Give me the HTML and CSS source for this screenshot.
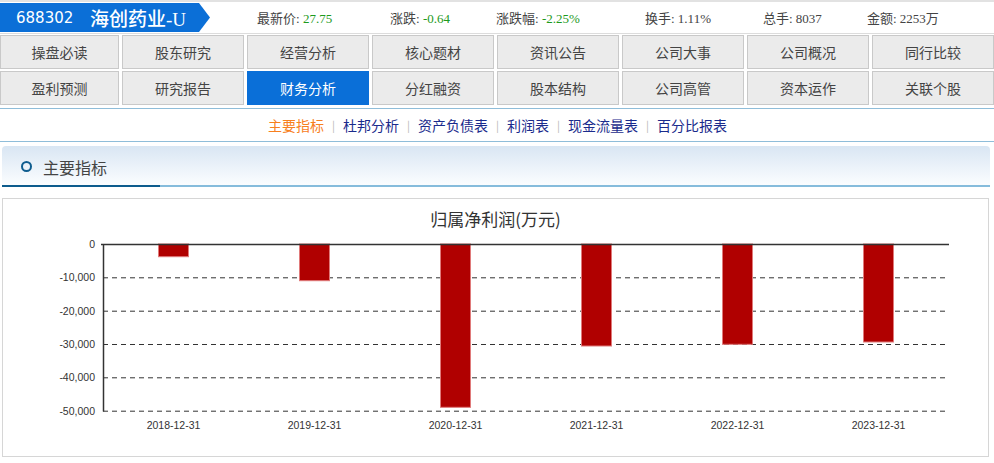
FILE: index.html
```html
<!DOCTYPE html>
<html lang="zh">
<head>
<meta charset="utf-8">
<title>海创药业-U 财务分析</title>
<link rel="stylesheet" href="styles.css">
</head>
<body>
<div class="topbar">
  <div class="badge"><span class="code">688302</span><span class="name">海创药业-U</span></div>
  <div class="stats">
    <div class="stat">最新价: <span class="green">27.75</span></div>
    <div class="stat">涨跌: <span class="green">-0.64</span></div>
    <div class="stat">涨跌幅: <span class="green">-2.25%</span></div>
    <div class="stat">换手: 1.11%</div>
    <div class="stat">总手: 8037</div>
    <div class="stat">金额: 2253万</div>
  </div>
</div>
<div class="nav">
  <div class="cell">操盘必读</div>
  <div class="cell">股东研究</div>
  <div class="cell">经营分析</div>
  <div class="cell">核心题材</div>
  <div class="cell">资讯公告</div>
  <div class="cell">公司大事</div>
  <div class="cell">公司概况</div>
  <div class="cell">同行比较</div>
  <div class="cell">盈利预测</div>
  <div class="cell">研究报告</div>
  <div class="cell active">财务分析</div>
  <div class="cell">分红融资</div>
  <div class="cell">股本结构</div>
  <div class="cell">公司高管</div>
  <div class="cell">资本运作</div>
  <div class="cell">关联个股</div>
</div>
<div class="subnav">
  <span class="sub current">主要指标</span><span class="sep">|</span>
  <span class="sub">杜邦分析</span><span class="sep">|</span>
  <span class="sub">资产负债表</span><span class="sep">|</span>
  <span class="sub">利润表</span><span class="sep">|</span>
  <span class="sub">现金流量表</span><span class="sep">|</span>
  <span class="sub">百分比报表</span>
</div>
<div class="panel-head">
  <div class="panel-title"><span class="ring"></span>主要指标</div>
</div>
<div class="chart-box">
  <div class="chart-title">归属净利润(万元)</div>
  <svg class="plot" width="986" height="216" viewBox="0 0 986 216">
    <g class="ylabels" font-family="Liberation Sans, Arial, sans-serif" font-size="10.5" fill="#333" text-anchor="end">
      <text x="92" y="10">0</text>
      <text x="92" y="43.3">-10,000</text>
      <text x="92" y="76.7">-20,000</text>
      <text x="92" y="110">-30,000</text>
      <text x="92" y="143.3">-40,000</text>
      <text x="92" y="176.7">-50,000</text>
    </g>
    <g stroke="#333" stroke-width="1" stroke-dasharray="5,4" fill="none">
      <line x1="100" y1="39.8" x2="944" y2="39.8"/>
      <line x1="100" y1="73.2" x2="944" y2="73.2"/>
      <line x1="100" y1="106.5" x2="944" y2="106.5"/>
      <line x1="100" y1="139.8" x2="944" y2="139.8"/>
      <line x1="100" y1="173.2" x2="944" y2="173.2"/>
    </g>
    <g fill="#b00000" stroke="#e07a7a" stroke-width="1">
      <rect x="155.5" y="6" width="30" height="12.7"/>
      <rect x="296.5" y="6" width="30" height="36.7"/>
      <rect x="437.5" y="6" width="30" height="163.3"/>
      <rect x="578.5" y="6" width="30" height="102"/>
      <rect x="719.5" y="6" width="30" height="100.3"/>
      <rect x="860.5" y="6" width="30" height="98"/>
    </g>
    <line x1="98" y1="6.5" x2="946" y2="6.5" stroke="#333" stroke-width="1.5"/>
    <line x1="100.5" y1="6" x2="100.5" y2="173.5" stroke="#333" stroke-width="1.5"/>
    <g class="xlabels" font-family="Liberation Sans, Arial, sans-serif" font-size="10.5" fill="#333" text-anchor="middle">
      <text x="170.5" y="191">2018-12-31</text>
      <text x="311.5" y="191">2019-12-31</text>
      <text x="452.5" y="191">2020-12-31</text>
      <text x="593.5" y="191">2021-12-31</text>
      <text x="734.5" y="191">2022-12-31</text>
      <text x="875.5" y="191">2023-12-31</text>
    </g>
  </svg>
</div>
</body>
</html>
```

FILE: styles.css
```css
* { box-sizing: border-box; }
body {
  margin: 0;
  background: #fff;
  font-family: "Liberation Serif", "Noto Sans CJK SC", serif;
  color: #333;
  width: 994px;
}
.topbar {
  display: flex;
  align-items: center;
  height: 34px;
  border-top: 2px solid #e2e2e2;
  border-bottom: 1px solid #dcdcdc;
  padding: 1px 0 1px 0;
}
.badge {
  width: 210px;
  height: 29px;
  background: #0b6fd7;
  clip-path: polygon(0 0, 199px 0, 210px 50%, 199px 100%, 0 100%);
  display: flex;
  align-items: center;
  color: #fff;
}
.badge .code {
  font-family: "DejaVu Sans", "Liberation Sans", sans-serif;
  font-size: 15px;
  margin-left: 16px;
  width: 74px;
}
.badge .name {
  font-family: "Liberation Serif", "Noto Sans CJK SC", serif;
  font-size: 19px;
  font-weight: 500;
}
.stats {
  display: grid;
  grid-template-columns: 133px 106px 149px 118px 104px 1fr;
  margin-left: 47px;
  flex: 1;
  font-size: 13px;
  color: #444;
}
.green { color: #1d9a1d; }
.nav {
  display: grid;
  grid-template-columns: 119px repeat(7, 122px);
  column-gap: 3px;
  row-gap: 2px;
  margin-top: 1px;
}
.cell {
  height: 34px;
  background: #ebebeb;
  border: 1px solid #c9c9c9;
  display: flex;
  align-items: center;
  justify-content: center;
  font-family: "Noto Sans CJK SC", sans-serif;
  font-size: 14px;
  color: #444;
}
.cell.active {
  background: #0a6fd8;
  border-color: #0a6fd8;
  color: #fff;
}
.subnav {
  margin-top: 3px;
  height: 34px;
  border-top: 1px solid #8fbdd9;
  border-bottom: 1px solid #8fbdd9;
  display: flex;
  align-items: center;
  justify-content: center;
  padding-left: 1px;
  font-family: "Noto Sans CJK SC", sans-serif;
  font-size: 14px;
}
.sub { color: #1a2b8c; }
.sub.current { color: #f7801e; }
.sep {
  color: #b8b8b8;
  font-size: 11px;
  margin: 0 8px;
}
.panel-head {
  margin: 4px 4px 0 2px;
  height: 41px;
  border-radius: 4px 4px 0 0;
  background: linear-gradient(#d9e6f3, #fbfdff);
  border-bottom: 2px solid #86bcdc;
  display: flex;
  align-items: flex-end;
}
.panel-title {
  width: 158px;
  height: 41px;
  margin-bottom: -2px;
  border-bottom: 2px solid #0d5c8d;
  display: flex;
  align-items: center;
  padding-left: 19px;
  padding-top: 2px;
  font-family: "Noto Sans CJK SC", sans-serif;
  font-size: 16px;
  color: #444;
}
.ring {
  width: 11px;
  height: 11px;
  border: 2px solid #0f5d8f;
  border-radius: 50%;
  margin-right: 11px;
}
.chart-box {
  margin: 11px 5px 0 2px;
  height: 259px;
  border: 1px solid #d6d6d6;
}
.chart-title {
  height: 39px;
  padding-top: 1px;
  line-height: 38px;
  text-align: center;
  font-family: "Noto Sans CJK SC", sans-serif;
  font-size: 17px;
  color: #333;
}
.plot { display: block; }
```
